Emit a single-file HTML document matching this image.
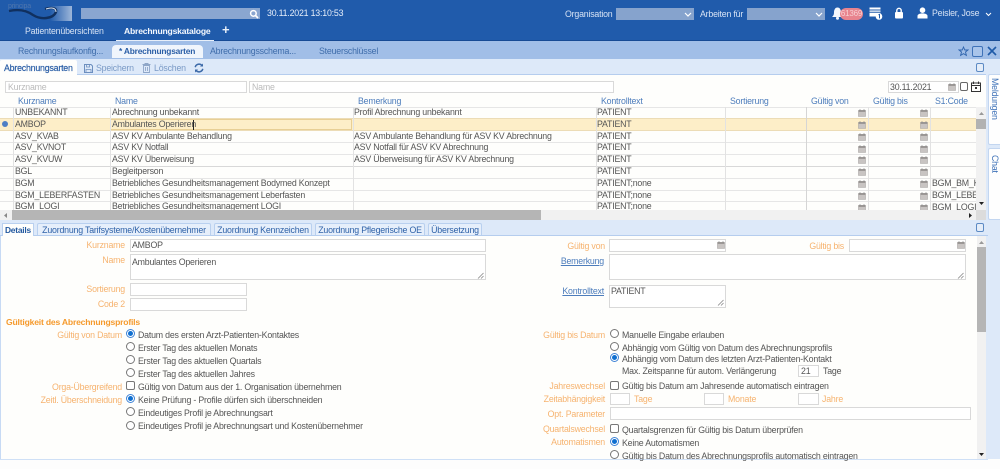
<!DOCTYPE html>
<html lang="de"><head><meta charset="utf-8"><title>Abrechnungsarten</title>
<style>
*{box-sizing:border-box}
html,body{margin:0;padding:0;width:1000px;height:469px;overflow:hidden;background:#fefefc}
body{position:relative;font:8.8px/12px "Liberation Sans",sans-serif;color:#555}
#r{position:absolute;left:0;top:0;width:1000px;height:469px;filter:blur(.3px);overflow:hidden}
#r div,#r span,#r svg,#r a{position:absolute;white-space:nowrap;letter-spacing:-.2px}
.h{color:#4d7dbc;top:95px}
.in{background:#fff;border:1px solid #d9d9d9}
.l{color:#f6b36f;text-align:right}
.o{color:#f6b36f}
.t{color:#555}
.st{color:#3f6dab;top:45px}
.tb{top:223px;height:12px;background:#e6effb;border:1px solid #b9d0ef;border-bottom:0;color:#2f62a8;line-height:12px;text-align:center;border-radius:2px 2px 0 0}
.ln{top:107px;width:1px;height:103px;background:#e2e2e2}
.hl{left:0;width:976px;height:1px;background:#e6e6e6}
.rb{width:9px;height:9px;border:1px solid #777;border-radius:50%;background:#fff}
.rc{width:9px;height:9px;border:1px solid #3f83d6;border-radius:50%;background:#fff}
.rc:after{content:"";position:absolute;left:1px;top:1px;width:5px;height:5px;border-radius:50%;background:#0f6fd0}
.cb{width:9px;height:9px;border:1px solid #777;border-radius:2px;background:#fff}
.u{color:#4d7dbc;text-decoration:underline;text-align:right}
.sq{width:8px;height:9px;border:1px solid #5c8ac4;border-radius:2px;background:#e4edf9}
#r .col{top:107px;line-height:11.8px;white-space:pre}
</style></head><body>
<svg width="0" height="0" style="position:absolute"><defs>
<symbol id="cal" viewBox="0 0 8 8"><path d="M0.5 1.5h7v6h-7z" fill="#c8c4c2" stroke="#aaa6a4" stroke-width=".6"/><path d="M0.5 1h7v2h-7z" fill="#9c9896"/><path d="M2 .2v1.4M6 .2v1.4" stroke="#888" stroke-width=".8"/></symbol>
</defs></svg>
<div id="r">
<!-- header -->
<div style="left:0;top:0;width:1000px;height:41px;background:#205bab"></div>
<div style="left:0;top:40px;width:1000px;height:1px;background:#174a94"></div>
<svg style="left:6px;top:4px" width="68" height="18" viewBox="0 0 68 18"><defs><linearGradient id="lg" x1="0" x2="1"><stop offset="0" stop-color="#205bab"/><stop offset="1" stop-color="#9db6d9"/></linearGradient></defs><rect x="44" y="2" width="22" height="15" fill="url(#lg)"/><path d="M3 7C12 5 20 6 27 11C35 16 47 15 50 8C51 4 46 3 39 5" fill="none" stroke="#10305f" stroke-width="2.4"/><path d="M40 5C46 3 50 4 50 8" fill="none" stroke="#d9e4f2" stroke-width="1"/></svg>
<div style="left:8px;top:1px;color:#4f76ae;font-size:7px">principa</div>
<div style="left:81px;top:8px;width:179px;height:11px;background:#8aa6d0"></div>
<svg style="left:249px;top:9px" width="10" height="10" viewBox="0 0 10 10"><circle cx="4.4" cy="4.4" r="2.8" fill="none" stroke="#fff" stroke-width="1.5"/><path d="M6.5 6.5L9 9" stroke="#fff" stroke-width="1.7"/></svg>
<div style="left:267px;top:7px;color:#e6eefa">30.11.2021 13:10:53</div>
<div style="left:25px;top:25px;color:#d6e2f4">Patientenübersichten</div>
<div style="left:124px;top:25px;color:#f4f8fe;font-size:8.6px;font-weight:bold">Abrechnungskataloge</div>
<div style="left:116px;top:40px;width:98px;height:1px;background:#e8eff9"></div>
<div style="left:222px;top:24px;color:#e8eff9;font-size:13px;font-weight:bold">+</div>
<div style="left:565px;top:8px;color:#d6e2f4">Organisation</div>
<div style="left:616px;top:8px;width:78px;height:12px;background:#86a3cd"></div>
<div style="left:700px;top:8px;color:#d6e2f4">Arbeiten für</div>
<div style="left:747px;top:8px;width:78px;height:12px;background:#86a3cd"></div>
<svg style="left:684px;top:12px" width="8" height="5" viewBox="0 0 8 5"><path d="M1 1l3 3 3-3" fill="none" stroke="#fff" stroke-width="1.2"/></svg>
<svg style="left:815px;top:12px" width="8" height="5" viewBox="0 0 8 5"><path d="M1 1l3 3 3-3" fill="none" stroke="#fff" stroke-width="1.2"/></svg>
<svg style="left:832px;top:7px" width="11" height="13" viewBox="0 0 11 13"><path d="M5.5 0.5C8 .5 9 3 9 5.500c0 2.500 1 3.500 2 4.500H0c1-1 2-2 2-4.500S3 .5 5.500 .5z" fill="#f4f7fc"/><circle cx="5.5" cy="11.3" r="1.5" fill="#f4f7fc"/></svg>
<div style="left:840px;top:8px;width:23px;height:12px;background:#e8848e;border-radius:6px;color:#f7cfd2;font-size:8px;line-height:12px;text-align:center">61369</div>
<svg style="left:869px;top:7px" width="14" height="13" viewBox="0 0 14 13"><path d="M.5 .5h11v9H.5z" fill="#fff"/><path d="M.5 3h11M.5 5.2h11" stroke="#205bab" stroke-width="1"/><circle cx="10" cy="9.5" r="3.3" fill="#fff"/><path d="M9.5 7.8l1-.4v4" stroke="#205bab" stroke-width="1" fill="none"/></svg>
<svg style="left:894px;top:7px" width="10" height="12" viewBox="0 0 10 12"><rect x="1" y="5" width="8" height="6.5" rx="1" fill="#fff"/><path d="M2.8 5.5V3.500a2.200 2.200 0 0 1 4.400 0v2" fill="none" stroke="#fff" stroke-width="1.4"/></svg>
<svg style="left:917px;top:7px" width="11" height="12" viewBox="0 0 11 12"><circle cx="5.5" cy="3.2" r="2.8" fill="#fff"/><path d="M.5 11.500V9c0-1.500 2-2.600 5-2.600s5 1.100 5 2.600v2.500z" fill="#fff"/></svg>
<div style="left:932px;top:7px;color:#d6e2f4">Peisler, Jose</div>
<svg style="left:985px;top:12px" width="7" height="5" viewBox="0 0 7 5"><path d="M1 1l2.500 2.500L6 1" fill="none" stroke="#fff" stroke-width="1"/></svg>
<!-- subtabs -->
<div style="left:0;top:41px;width:1000px;height:18px;background:#a1bee7"></div>
<div style="left:112px;top:45px;width:91px;height:13px;background:#f0f5fc;border-radius:4px 4px 0 0"></div>
<div class="st" style="left:18px">Rechnungslaufkonfig...</div>
<div class="st" style="left:119px;color:#2a5ea6;font-weight:bold;font-size:8.4px">* Abrechnungsarten</div>
<div class="st" style="left:210px">Abrechnungsschema...</div>
<div class="st" style="left:319px">Steuerschlüssel</div>
<svg style="left:958px;top:46px" width="11" height="11" viewBox="0 0 11 11"><path d="M5.500 1l1.300 3h3.200L7.500 6l.9 3.400L5.500 7.600 2.600 9.400 3.500 6 1 4h3.200z" fill="none" stroke="#2d63ad" stroke-width=".9"/></svg>
<div style="left:972px;top:46px;width:11px;height:11px;border:1px solid #3f72b8;border-radius:2px;background:#a9c4ea"></div>
<svg style="left:987px;top:46px" width="10" height="10" viewBox="0 0 10 10"><path d="M1 1l8 8M9 1l-8 8" stroke="#1f5aa8" stroke-width="1.6"/></svg>
<!-- toolbar -->
<div style="left:0;top:59px;width:1000px;height:15px;background:#dde9f9"></div>
<div style="left:0;top:74px;width:1000px;height:1px;background:#b5cdee"></div>
<div style="left:0;top:60px;width:77px;height:15px;background:#fefefc;border-radius:2px 2px 0 0"></div>
<div style="left:4px;top:62px;color:#2a5ea6;-webkit-text-stroke:.2px #2a5ea6">Abrechnungsarten</div>
<svg style="left:84px;top:64px" width="9" height="9" viewBox="0 0 9 9"><path d="M.5 .5h6.500l1.500 1.500v6.500h-8z" fill="none" stroke="#6d8fbf"/><path d="M2.500 1v2h3V1M2 8V5.500h5V8" fill="none" stroke="#6d8fbf" stroke-width=".8"/></svg>
<div style="left:96px;top:62px;color:#7a9ac6">Speichern</div>
<svg style="left:142px;top:63px" width="9" height="10" viewBox="0 0 9 10"><path d="M1.500 2.500h6v7h-6zM.5 1.500h8M3 1.500V.5h3v1M3.500 4v4M5.500 4v4" fill="none" stroke="#8ea6c8" stroke-width=".9"/></svg>
<div style="left:154px;top:62px;color:#7a9ac6">Löschen</div>
<svg style="left:194px;top:63px" width="10" height="10" viewBox="0 0 10 10"><path d="M1.200 4.200A3.900 3.900 0 0 1 8 2.600M8.800 5.800A3.900 3.900 0 0 1 2 7.400" fill="none" stroke="#3b69a8" stroke-width="1.500"/><path d="M9 .5v3H6zM1 9.500v-3h3z" fill="#3b69a8"/></svg>
<div class="sq" style="left:976px;top:63px"></div>
<!-- right side -->
<div style="left:986px;top:74px;width:14px;height:385px;background:#dde9f9"></div>
<div style="left:988px;top:74px;width:12px;height:71px;background:#fefefe;border:1px solid #c3d6f0;border-right:0;border-radius:2px 0 0 2px"></div>
<div style="left:988px;top:148px;width:12px;height:72px;background:#fefefe;border:1px solid #c3d6f0;border-right:0;border-radius:2px 0 0 2px"></div>
<div style="left:989px;top:78px;width:11px;height:60px;writing-mode:vertical-rl;color:#3f72b8;line-height:11px">Meldungen</div>
<div style="left:989px;top:155px;width:11px;height:30px;writing-mode:vertical-rl;color:#3f72b8;line-height:11px">Chat</div>
<!-- filter row -->
<div class="in" style="left:5px;top:81px;width:242px;height:12px;color:#bbb;line-height:10px;padding-left:2px">Kurzname</div>
<div class="in" style="left:249px;top:81px;width:365px;height:12px;color:#bbb;line-height:10px;padding-left:2px">Name</div>
<div class="in" style="left:888px;top:81px;width:71px;height:12px;color:#555;line-height:10px;padding-left:1px">30.11.2021</div>
<svg style="left:948px;top:83px" width="8" height="8"><use href="#cal"/></svg>
<div style="left:960px;top:82px;width:8px;height:9px;border:1px solid #666;border-radius:2px;background:#fff"></div>
<svg style="left:971px;top:81px" width="10" height="11" viewBox="0 0 10 11"><path d="M.5 2h9v8.500h-9zM.5 4.500h9M2.500 .5v2.500M7.500 .5v2.500" fill="none" stroke="#333" stroke-width="1"/><rect x="4" y="6" width="2" height="2" fill="#333"/></svg>
<!-- header row -->
<div class="h" style="left:18px">Kurzname</div><div class="h" style="left:115px">Name</div><div class="h" style="left:358px">Bemerkung</div><div class="h" style="left:601px">Kontrolltext</div><div class="h" style="left:730px">Sortierung</div><div class="h" style="left:811px">Gültig von</div><div class="h" style="left:873px">Gültig bis</div><div class="h" style="left:935px">S1:Code</div>
<!-- table -->
<div style="left:0;top:118px;width:976px;height:13px;background:#fdeec8;border-top:1px solid #ecdcb6;border-bottom:1px solid #ecdcb6"></div>
<div style="left:110px;top:119px;width:242px;height:11px;border:1px solid #e8cf95"></div>
<div style="left:2px;top:121px;width:6px;height:6px;background:#4f7fc4;border-radius:50%"></div>
<div style="left:193px;top:120px;width:1px;height:10px;background:#222"></div>
<div class="hl" style="top:107px"></div><div class="hl" style="top:142px"></div><div class="hl" style="top:154px"></div><div class="hl" style="top:166px;background:#d8d8d8"></div><div class="hl" style="top:178px"></div><div class="hl" style="top:190px"></div><div class="hl" style="top:201px"></div>
<div class="ln" style="left:13px"></div><div class="ln" style="left:110px"></div><div class="ln" style="left:353px"></div><div class="ln" style="left:596px"></div><div class="ln" style="left:725px"></div><div class="ln" style="left:806px;background:#d5d5d5"></div><div class="ln" style="left:868px"></div><div class="ln" style="left:930px"></div>
<div class="col" style="left:15px">UNBEKANNT
AMBOP
ASV_KVAB
ASV_KVNOT
ASV_KVUW
BGL
BGM
BGM_LEBERFASTEN
BGM_LOGI</div>
<div class="col" style="left:112px">Abrechnung unbekannt
Ambulantes Operieren
ASV KV Ambulante Behandlung
ASV KV Notfall
ASV KV Überweisung
Begleitperson
Betriebliches Gesundheitsmanagement Bodymed Konzept
Betriebliches Gesundheitsmanagement Leberfasten
Betriebliches Gesundheitsmanagement LOGI</div>
<div class="col" style="left:354px">Profil Abrechnung unbekannt

ASV Ambulante Behandlung für ASV KV Abrechnung
ASV Notfall für ASV KV Abrechnung
ASV Überweisung für ASV KV Abrechnung</div>
<div class="col" style="left:597px">PATIENT
PATIENT
PATIENT
PATIENT
PATIENT
PATIENT
PATIENT;none
PATIENT;none
PATIENT;none</div>
<div class="col" style="left:932px;top:178.4px;width:44px;overflow:hidden;height:31.6px">BGM_BM_KONZ
BGM_LEBERFASTEN
BGM_LOGI</div>
<svg style="left:858px;top:109px" width="8" height="8"><use href="#cal"/></svg><svg style="left:920px;top:109px" width="8" height="8"><use href="#cal"/></svg>
<svg style="left:858px;top:121px" width="8" height="8"><use href="#cal"/></svg><svg style="left:920px;top:121px" width="8" height="8"><use href="#cal"/></svg>
<svg style="left:858px;top:133px" width="8" height="8"><use href="#cal"/></svg><svg style="left:920px;top:133px" width="8" height="8"><use href="#cal"/></svg>
<svg style="left:858px;top:145px" width="8" height="8"><use href="#cal"/></svg><svg style="left:920px;top:145px" width="8" height="8"><use href="#cal"/></svg>
<svg style="left:858px;top:156px" width="8" height="8"><use href="#cal"/></svg><svg style="left:920px;top:156px" width="8" height="8"><use href="#cal"/></svg>
<svg style="left:858px;top:168px" width="8" height="8"><use href="#cal"/></svg><svg style="left:920px;top:168px" width="8" height="8"><use href="#cal"/></svg>
<svg style="left:858px;top:180px" width="8" height="8"><use href="#cal"/></svg><svg style="left:920px;top:180px" width="8" height="8"><use href="#cal"/></svg>
<svg style="left:858px;top:192px" width="8" height="8"><use href="#cal"/></svg><svg style="left:920px;top:192px" width="8" height="8"><use href="#cal"/></svg>
<svg style="left:858px;top:204px" width="8" height="6"><use href="#cal" width="8" height="8"/></svg><svg style="left:920px;top:204px" width="8" height="6"><use href="#cal" width="8" height="8"/></svg>
<!-- scrollbars table -->
<div style="left:976px;top:107px;width:10px;height:103px;background:#f1f1f1"></div>
<div style="left:976px;top:119px;width:10px;height:10px;background:#b2b2b2"></div>
<svg style="left:979px;top:112px" width="5" height="3" viewBox="0 0 5 3"><path d="M2.500 0L5 3H0z" fill="#999"/></svg>
<svg style="left:979px;top:202px" width="5" height="3" viewBox="0 0 5 3"><path d="M2.500 3L5 0H0z" fill="#222"/></svg>
<div style="left:0;top:210px;width:986px;height:10px;background:#f1f1f1"></div>
<div style="left:12px;top:210px;width:529px;height:10px;background:#b5b5b5"></div>
<div style="left:976px;top:210px;width:10px;height:10px;background:#dcdcdc"></div>
<svg style="left:969px;top:213px" width="3" height="5" viewBox="0 0 3 5"><path d="M3 2.500L0 0v5z" fill="#222"/></svg>
<svg style="left:4px;top:213px" width="3" height="5" viewBox="0 0 3 5"><path d="M0 2.500L3 0v5z" fill="#888"/></svg>
<!-- details tab bar -->
<div style="left:0;top:220px;width:1000px;height:15px;background:#dde9f9"></div>
<div style="left:0;top:235px;width:988px;height:1px;background:#b5cdee"></div>
<div style="left:2px;top:223px;width:32px;height:13px;background:#fefefc;border:1px solid #b9d0ef;border-bottom:0;color:#22589f;font-weight:bold;font-size:8.4px;line-height:12px;text-align:center">Details</div>
<div class="tb" style="left:37px;width:174px">Zuordnung Tarifsysteme/Kostenübernehmer</div>
<div class="tb" style="left:214px;width:98px">Zuordnung Kennzeichen</div>
<div class="tb" style="left:315px;width:110px">Zuordnung Pflegerische OE</div>
<div class="tb" style="left:428px;width:54px">Übersetzung</div>
<div class="sq" style="left:976px;top:223px"></div>
<!-- details panel -->
<div style="left:0;top:236px;width:1px;height:223px;background:#c7daf4"></div>
<div style="left:986px;top:236px;width:2px;height:223px;background:#dde9f9"></div>
<div style="left:0;top:459px;width:988px;height:1px;background:#cfe0f6"></div>
<div style="left:0;top:460px;width:1000px;height:9px;background:#fdfdfd"></div>
<div style="left:977px;top:236px;width:9px;height:223px;background:#f1f1f1"></div>
<div style="left:977px;top:247px;width:9px;height:85px;background:#b5b5b5"></div>
<svg style="left:979px;top:241px" width="5" height="3" viewBox="0 0 5 3"><path d="M2.500 0L5 3H0z" fill="#999"/></svg>
<svg style="left:979px;top:453px" width="5" height="3" viewBox="0 0 5 3"><path d="M2.500 3L5 0H0z" fill="#222"/></svg>
<!-- left form -->
<div class="l" style="left:60px;width:65px;top:239px">Kurzname</div>
<div class="in" style="left:130px;top:239px;width:356px;height:13px;line-height:11px;padding-left:1px">AMBOP</div>
<div class="l" style="left:60px;width:65px;top:254px">Name</div>
<div class="in" style="left:130px;top:254px;width:356px;height:26px;line-height:11px;padding:2px 0 0 1px">Ambulantes Operieren</div>
<svg style="left:477px;top:272px" width="7" height="7" viewBox="0 0 7 7"><path d="M1 6.500L6.500 1M4 6.500L6.500 4" stroke="#888" stroke-width=".8"/></svg>
<div class="l" style="left:60px;width:65px;top:283px">Sortierung</div>
<div class="in" style="left:130px;top:283px;width:117px;height:13px"></div>
<div class="l" style="left:60px;width:65px;top:298px">Code 2</div>
<div class="in" style="left:130px;top:298px;width:117px;height:13px"></div>
<div style="left:6px;top:316px;color:#f59a2d;font-weight:bold;font-size:8.6px">Gültigkeit des Abrechnungsprofils</div>
<div class="l" style="left:22px;width:100px;top:329px">Gültig von Datum</div>
<div class="l" style="left:22px;width:100px;top:381px">Orga-Übergreifend</div>
<div class="l" style="left:22px;width:100px;top:394px">Zeitl. Überschneidung</div>
<div class="rc" style="left:126px;top:329px"></div>
<div class="rb" style="left:126px;top:342px"></div>
<div class="rb" style="left:126px;top:355px"></div>
<div class="rb" style="left:126px;top:368px"></div>
<div class="cb" style="left:126px;top:381px"></div>
<div class="rc" style="left:126px;top:394px"></div>
<div class="rb" style="left:126px;top:407px"></div>
<div class="rb" style="left:126px;top:421px"></div>
<div class="t" style="left:138px;top:329px">Datum des ersten Arzt-Patienten-Kontaktes</div>
<div class="t" style="left:138px;top:342px">Erster Tag des aktuellen Monats</div>
<div class="t" style="left:138px;top:355px">Erster Tag des aktuellen Quartals</div>
<div class="t" style="left:138px;top:368px">Erster Tag des aktuellen Jahres</div>
<div class="t" style="left:138px;top:381px">Gültig von Datum aus der 1. Organisation übernehmen</div>
<div class="t" style="left:138px;top:394px">Keine Prüfung - Profile dürfen sich überschneiden</div>
<div class="t" style="left:138px;top:407px">Eindeutiges Profil je Abrechnungsart</div>
<div class="t" style="left:138px;top:420px">Eindeutiges Profil je Abrechnungsart und Kostenübernehmer</div>
<!-- right form -->
<div class="l" style="left:545px;width:60px;top:240px">Gültig von</div>
<div class="in" style="left:609px;top:239px;width:117px;height:13px"></div>
<svg style="left:717px;top:241px" width="8" height="8"><use href="#cal"/></svg>
<div class="l" style="left:784px;width:60px;top:240px">Gültig bis</div>
<div class="in" style="left:849px;top:239px;width:117px;height:13px"></div>
<svg style="left:957px;top:241px" width="8" height="8"><use href="#cal"/></svg>
<div class="u" style="left:545px;width:59px;top:255px">Bemerkung</div>
<div class="in" style="left:609px;top:254px;width:357px;height:26px"></div>
<svg style="left:957px;top:272px" width="7" height="7" viewBox="0 0 7 7"><path d="M1 6.500L6.500 1M4 6.500L6.500 4" stroke="#888" stroke-width=".8"/></svg>
<div class="u" style="left:545px;width:59px;top:285px">Kontrolltext</div>
<div class="in" style="left:609px;top:285px;width:117px;height:23px;line-height:11px;padding-left:1px">PATIENT</div>
<svg style="left:717px;top:299px" width="7" height="7" viewBox="0 0 7 7"><path d="M1 6.500L6.500 1M4 6.500L6.500 4" stroke="#888" stroke-width=".8"/></svg>
<div class="l" style="left:525px;width:80px;top:329px">Gültig bis Datum</div>
<div class="l" style="left:525px;width:80px;top:380px">Jahreswechsel</div>
<div class="l" style="left:525px;width:80px;top:393px">Zeitabhängigkeit</div>
<div class="l" style="left:525px;width:80px;top:408px">Opt. Parameter</div>
<div class="l" style="left:525px;width:80px;top:423px">Quartalswechsel</div>
<div class="l" style="left:525px;width:80px;top:436px">Automatismen</div>
<div class="rb" style="left:610px;top:329px"></div>
<div class="rb" style="left:610px;top:342px"></div>
<div class="rc" style="left:610px;top:353px"></div>
<div class="cb" style="left:610px;top:381px"></div>
<div class="cb" style="left:610px;top:424px"></div>
<div class="rc" style="left:610px;top:437px"></div>
<div class="rb" style="left:610px;top:450px"></div>
<div class="t" style="left:622px;top:329px">Manuelle Eingabe erlauben</div>
<div class="t" style="left:622px;top:342px">Abhängig vom Gültig von Datum des Abrechnungsprofils</div>
<div class="t" style="left:622px;top:353px">Abhängig vom Datum des letzten Arzt-Patienten-Kontakt</div>
<div class="t" style="left:622px;top:365px">Max. Zeitspanne für autom. Verlängerung</div>
<div class="in" style="left:798px;top:365px;width:21px;height:12px;line-height:10px;padding-left:2px">21</div>
<div class="t" style="left:823px;top:365px">Tage</div>
<div class="t" style="left:622px;top:380px">Gültig bis Datum am Jahresende automatisch eintragen</div>
<div class="in" style="left:610px;top:393px;width:20px;height:12px"></div>
<div class="o" style="left:634px;top:393px">Tage</div>
<div class="in" style="left:704px;top:393px;width:20px;height:12px"></div>
<div class="o" style="left:728px;top:393px">Monate</div>
<div class="in" style="left:798px;top:393px;width:21px;height:12px"></div>
<div class="o" style="left:822px;top:393px">Jahre</div>
<div class="in" style="left:610px;top:407px;width:361px;height:13px"></div>
<div class="t" style="left:622px;top:424px">Quartalsgrenzen für Gültig bis Datum überprüfen</div>
<div class="t" style="left:622px;top:437px">Keine Automatismen</div>
<div class="t" style="left:622px;top:450px">Gültig bis Datum des Abrechnungsprofils automatisch eintragen</div>
</div>
</body></html>
